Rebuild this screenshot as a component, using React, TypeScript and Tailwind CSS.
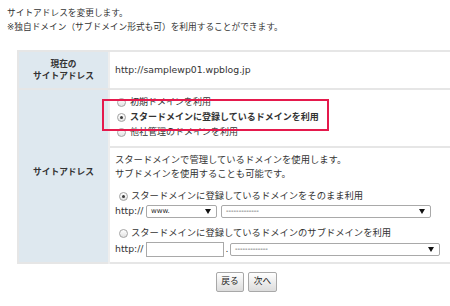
import React from 'react';

const Radio = ({ checked = false }: { checked?: boolean }) => (
    <span className="inline-flex w-[9px] h-[9px] shrink-0 rounded-full border border-[#a3a3a3] bg-gradient-to-b from-white to-[#e2e2e2] items-center justify-center">
        {checked && <span className="w-[3px] h-[3px] rounded-full bg-[#3a3a3a]"></span>}
    </span>
);

const Arrow = () => (
    <svg width="6" height="5" viewBox="0 0 6 5" className="shrink-0">
        <path d="M0 0H6L3 5Z" fill="#111" />
    </svg>
);

const FakeSelect = ({ value, className }: { value: string; className: string }) => (
    <div className={`flex items-center justify-between h-[13px] border border-[#a9a9a9] rounded-[2px] bg-white pl-[4px] pr-[5px] ${className}`}>
        <span className="text-[7px] leading-none text-[#222]">{value}</span>
        <Arrow />
    </div>
);

const App = () => {
    return (
        <div className="relative w-[450px] h-[306px] overflow-hidden bg-white text-[#333] font-['DejaVu_Sans','Noto_Sans_CJK_JP',sans-serif]">
            <div className="pl-[7px] pt-[6px] text-[8.7px] leading-[14px]">
                <p>サイトアドレスを変更します。</p>
                <p>※独自ドメイン（サブドメイン形式も可）を利用することができます。</p>
            </div>

            <div className="ml-[17px] mt-[16px] w-[460px] border-t-2 border-l-2 border-[#e6e6e6]">
                {/* current address */}
                <div className="flex h-[38px] border-b-2 border-[#e6e6e6]">
                    <div className="w-[89px] shrink-0 bg-[#dee8ef] flex flex-col items-center justify-center font-bold text-[8.7px] leading-[12.5px] text-[#333]">
                        <span>現在の</span>
                        <span>サイトアドレス</span>
                    </div>
                    <div className="flex-1 border-l-2 border-[#eeeeee] flex items-center pl-[5px] text-[9.3px]">
                        http://samplewp01.wpblog.jp
                    </div>
                </div>

                {/* new address */}
                <div className="flex">
                    <div className="w-[89px] shrink-0 bg-[#dee8ef] flex items-center justify-center pb-[6px] border-b-2 border-[#e6e6e6] font-bold text-[8.7px]">
                        サイトアドレス
                    </div>
                    <div className="flex-1 border-l-2 border-[#eeeeee] flex flex-col">
                        <div className="h-[58px] border-b-2 border-[#e6e6e6] pt-[5px] pl-[7px] text-[9px] leading-[15px]">
                            <label className="flex items-center gap-[4px]">
                                <Radio />
                                <span>初期ドメインを利用</span>
                            </label>
                            <label className="flex items-center gap-[4px] font-bold">
                                <Radio checked />
                                <span>スタードメインに登録しているドメインを利用</span>
                            </label>
                            <label className="flex items-center gap-[4px]">
                                <Radio />
                                <span>他社管理のドメインを利用</span>
                            </label>
                        </div>

                        <div className="h-[116px] border-b-2 border-[#e6e6e6] pt-[5px] pl-[5px] text-[9.3px] leading-[14px]">
                            <p>スタードメインで管理しているドメインを使用します。</p>
                            <p>サブドメインを使用することも可能です。</p>

                            <label className="mt-[8px] flex items-center gap-[3px] pl-[4px]">
                                <Radio checked />
                                <span>スタードメインに登録しているドメインをそのまま利用</span>
                            </label>
                            <div className="mt-[1px] flex items-center h-[14px]">
                                <span className="w-[31px]">http://</span>
                                <FakeSelect value="www." className="w-[71px]" />
                                <FakeSelect value="-------------" className="w-[210px] ml-[4px]" />
                            </div>

                            <label className="mt-[8px] flex items-center gap-[3px] pl-[4px]">
                                <Radio />
                                <span>スタードメインに登録しているドメインのサブドメインを利用</span>
                            </label>
                            <div className="mt-[1px] flex items-center h-[16px]">
                                <span className="w-[31px]">http://</span>
                                <div className="w-[78px] h-[15px] border border-[#a9a9a9] bg-white"></div>
                                <span className="w-[6px] text-center">.</span>
                                <FakeSelect value="-------------" className="w-[210px]" />
                            </div>
                        </div>
                    </div>
                </div>
            </div>

            <div className="mt-[8px] flex gap-[4px] pl-[216px]">
                <button className="w-[28px] h-[20px] border border-[#a8a8a8] rounded-[2px] bg-gradient-to-b from-white to-[#dcdcdc] text-[8.7px] text-[#222]">
                    戻る
                </button>
                <button className="w-[29px] h-[20px] border border-[#a8a8a8] rounded-[2px] bg-gradient-to-b from-white to-[#dcdcdc] text-[8.7px] text-[#222]">
                    次へ
                </button>
            </div>

            {/* highlight box */}
            <div className="absolute left-[102px] top-[99px] w-[227px] h-[32px] border-2 border-[#e5194c]"></div>
        </div>
    );
};

export default App;
